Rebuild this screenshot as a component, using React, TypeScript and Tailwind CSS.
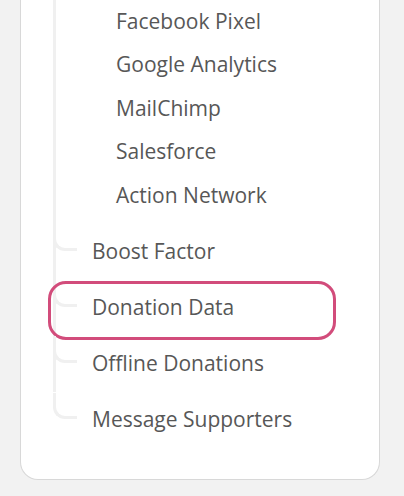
const SUB_ITEMS = ["Facebook Pixel", "Google Analytics", "MailChimp", "Salesforce", "Action Network"];

const ITEMS = [
  { label: "Boost Factor" },
  { label: "Donation Data", highlight: true },
  { label: "Offline Donations" },
  { label: "Message Supporters" },
];

function Connector() {
  return <div className="-ml-[3px] h-[26px] w-[24px] shrink-0 rounded-bl-[12px] border-b-[3px] border-l-[3px] border-[#f0f0f0]" />;
}

export default function App() {
  return (
    <div
      className="h-[496px] w-[404px] overflow-hidden bg-[#f2f2f2] pl-[20px]"
      style={{ fontFamily: '"Open Sans", sans-serif' }}
    >
      <div className="h-[480px] w-[360px] rounded-b-[18px] border-x border-b border-[#d8d8d8] bg-white pl-[32px]">
        <ul className="text-[21px] text-[#575757]">
          {/* parent item scrolled out of view, with its nested list */}
          <li className="border-l-[3px] border-[#f0f0f0] pb-[6.5px]">
            <ul className="-mt-[0.5px] pl-[60px]">
              {SUB_ITEMS.map((s) => (
                <li key={s} className="flex h-[43.5px] items-center">
                  {s}
                </li>
              ))}
            </ul>
          </li>
          {ITEMS.map((item, i) => {
            const last = i === ITEMS.length - 1;
            return (
              <li
                key={item.label}
                className={`relative flex h-[56.2px] ${last ? "border-l-[3px] border-transparent" : "border-l-[3px] border-[#f0f0f0]"}`}
              >
                <div className="mt-[1px]">
                  <Connector />
                </div>
                <span className="ml-[15px] flex items-center">{item.label}</span>
                {item.highlight && (
                  <div className="pointer-events-none absolute left-[-8px] top-[1px] h-[59px] w-[288px] rounded-[18px] border-[3px] border-[#d24c7b]" />
                )}
              </li>
            );
          })}
        </ul>
      </div>
    </div>
  );
}
